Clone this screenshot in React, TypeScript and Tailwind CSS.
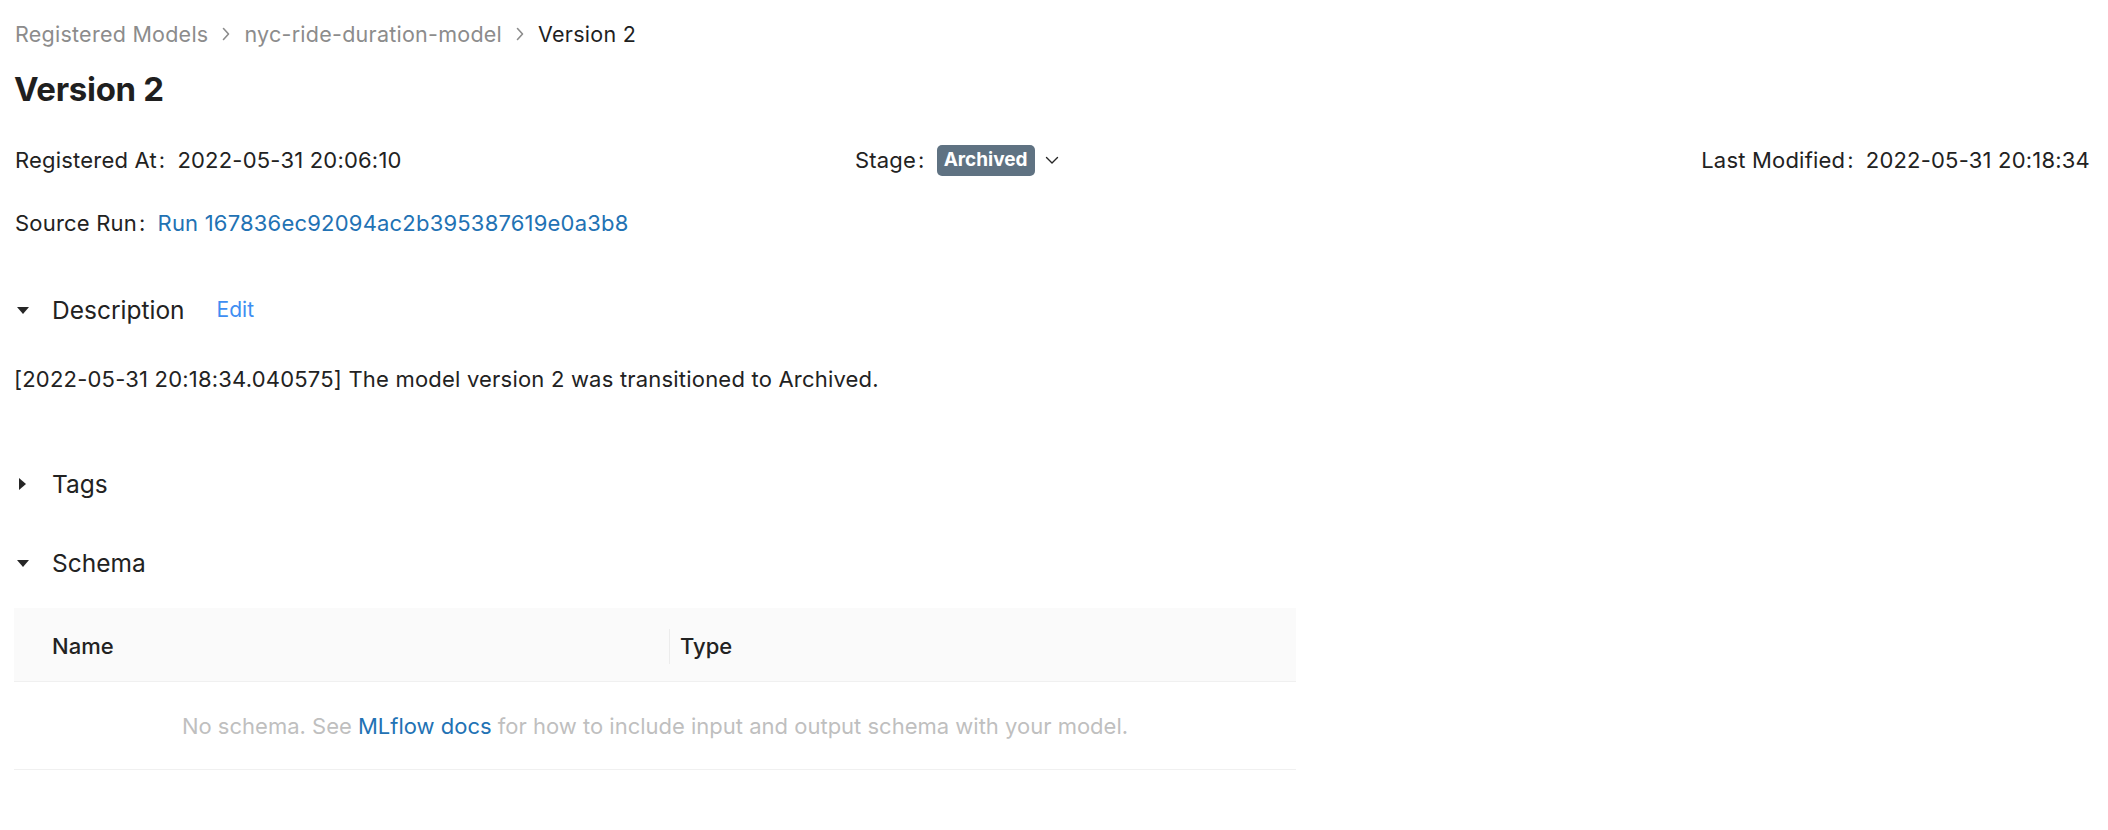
import React from 'react';

const Chevron: React.FC = () => (
  <svg width="10" height="16" viewBox="0 0 10 16" className="mx-[13px]" fill="none">
    <path d="M2.5 2.5 L7.5 8 L2.5 13.5" stroke="#8c8c8c" strokeWidth="1.6" strokeLinecap="round" strokeLinejoin="round" />
  </svg>
);

const CaretDown: React.FC = () => (
  <svg width="12" height="7" viewBox="0 0 12 7" className="ml-[3px] mr-[23px]">
    <path d="M0 0 H12 L6 7 Z" fill="#262626" />
  </svg>
);

const CaretRight: React.FC = () => (
  <svg width="7" height="12" viewBox="0 0 7 12" className="ml-[5px] mr-[26px]">
    <path d="M0 0 L7 6 L0 12 Z" fill="#262626" />
  </svg>
);

const Label: React.FC<{ text: string }> = ({ text }) => (
  <span>
    {text}
    <span className="ml-[2px] mr-[12px]">:</span>
  </span>
);

const App: React.FC = () => {
  return (
    <div
      className="min-h-screen bg-white px-[14px] text-[22px] tracking-[0.2px] text-[#222222]"
      style={{ fontFamily: 'Inter, "Noto Sans", sans-serif' }}
    >
      {/* Breadcrumb */}
      <div className="flex h-[68px] items-center pl-[1px] text-[21.5px] tracking-[0.25px]">
        <span className="text-[#8c8c8c]">Registered Models</span>
        <Chevron />
        <span className="text-[#8c8c8c]">nyc-ride-duration-model</span>
        <Chevron />
        <span className="text-[#1f1f1f]">Version 2</span>
      </div>

      {/* Title */}
      <div className="flex h-[44px] items-center">
        <h1 className="text-[33px] font-bold tracking-[-0.3px] text-[#1f1f1f]">Version 2</h1>
      </div>

      {/* Meta rows */}
      <div className="mt-[28px] grid h-[40px] grid-cols-[841px_1fr_auto] items-center pr-[4px]">
        <div className="pl-[1px]">
          <Label text="Registered At" />
          <span>2022-05-31 20:06:10</span>
        </div>
        <div className="flex items-center">
          <Label text="Stage" />
          <span className="flex h-[31px] items-center rounded-[5px] bg-[#5f7282] px-[7px] text-[19px] font-bold tracking-normal text-white">Archived</span>
          <svg width="14" height="9" viewBox="0 0 14 9" className="ml-[10px]" fill="none">
            <path d="M1.5 1.5 L7 7 L12.5 1.5" stroke="#262626" strokeWidth="1.4" strokeLinecap="round" strokeLinejoin="round" />
          </svg>
        </div>
        <div>
          <Label text="Last Modified" />
          <span>2022-05-31 20:18:34</span>
        </div>
      </div>

      <div className="mt-[23px] flex h-[40px] items-center pl-[1px]">
        <Label text="Source Run" />
        <a className="text-[#2272b4]">Run 167836ec92094ac2b395387619e0a3b8</a>
      </div>

      {/* Description */}
      <div className="mt-[47px] flex h-[40px] items-center">
        <CaretDown />
        <span className="text-[24.5px] tracking-normal">Description</span>
        <a className="ml-[32px] text-[21px] tracking-normal text-[#3e8ef2]">Edit</a>
      </div>
      <div className="mt-[29px] flex h-[40px] items-center">
        [2022-05-31 20:18:34.040575] The model version 2 was transitioned to Archived.
      </div>

      {/* Tags */}
      <div className="mt-[65px] flex h-[40px] items-center">
        <CaretRight />
        <span className="text-[24.5px] tracking-normal">Tags</span>
      </div>

      {/* Schema */}
      <div className="mt-[39px] flex h-[40px] items-center">
        <CaretDown />
        <span className="text-[24.5px] tracking-normal">Schema</span>
      </div>

      <div className="mt-[25px] w-[1282px] tracking-normal">
        <div className="flex h-[74px] items-center border-b border-[#f0f0f0] bg-[#fafafa] pt-[3px] font-medium">
          <div className="w-[655px] pl-[38px]">Name</div>
          <div className="h-[35px] w-px bg-[#ececec]" />
          <div className="pl-[10px]">Type</div>
        </div>
        <div className="flex h-[88px] items-center justify-center border-b border-[#f0f0f0] pt-[2px] text-[#bfbfbf]">
          <span>
            No schema. See <a className="text-[#2272b4]">MLflow docs</a> for how to include input and output schema with your model.
          </span>
        </div>
      </div>
    </div>
  );
};

export default App;
